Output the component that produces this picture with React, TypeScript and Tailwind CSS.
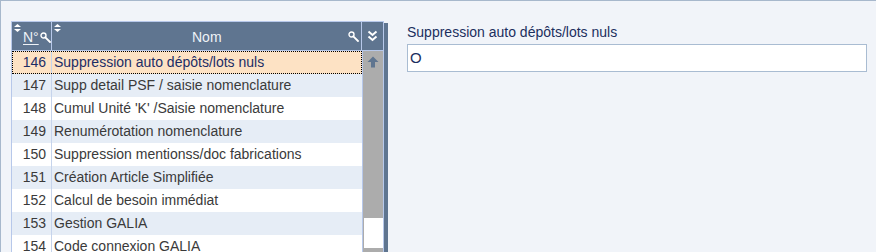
import React from 'react';

// Rows of the parameter list
interface Row {
  num: number;
  label: string;
}

const rows: Row[] = [
  { num: 146, label: 'Suppression auto dépôts/lots nuls' },
  { num: 147, label: 'Supp detail PSF / saisie nomenclature' },
  { num: 148, label: "Cumul Unité 'K' /Saisie nomenclature" },
  { num: 149, label: 'Renumérotation nomenclature' },
  { num: 150, label: 'Suppression mentionss/doc fabrications' },
  { num: 151, label: 'Création Article Simplifiée' },
  { num: 152, label: 'Calcul de besoin immédiat' },
  { num: 153, label: 'Gestion GALIA' },
  { num: 154, label: 'Code connexion GALIA' },
];

const SortIcon = () => (
  <svg width="7" height="8" viewBox="0 0 7 8" className="absolute left-[2px] top-[2px]">
    <path d="M3.5 0 L7 3 L0 3 Z" fill="#ffffff" />
    <path d="M0 5 L7 5 L3.5 8 Z" fill="#ffffff" />
  </svg>
);

const KeyIcon = ({ className }: { className: string }) => (
  <svg width="11" height="11" viewBox="0 0 11 11" className={className}>
    <circle cx="3.5" cy="3.5" r="2.5" fill="none" stroke="#ffffff" strokeWidth="1.4" />
    <path d="M5.3 5.3 L10 10" stroke="#ffffff" strokeWidth="1.8" strokeLinecap="round" />
  </svg>
);

export default function App() {
  const selected = 146;

  return (
    <div
      className="w-[876px] h-[252px] overflow-hidden bg-[#f1f4f9] border-t border-l border-[#a7b8cc] flex items-start"
      style={{ fontFamily: '"Liberation Sans", Arial, sans-serif' }}
    >
      {/* Table */}
      <div className="ml-[10px] mt-[20px] w-[373px] border border-[#b7c8ea] bg-white shadow-[4px_2px_0_0_#5f7590]">
        {/* Header */}
        <div className="flex h-[29px] bg-[#5f7590] border-b border-[#b7c8ea]">
          <div className="relative w-[40px] border-r border-[#b7c8ea] text-[14px] text-[#eef2f7]">
            <SortIcon />
            <span className="absolute left-[11px] top-[5px] underline underline-offset-2">N°</span>
            <KeyIcon className="absolute left-[28px] top-[10px]" />
          </div>
          <div className="relative w-[310px] border-r border-[#b7c8ea] text-[14px] text-[#eef2f7]">
            <SortIcon />
            <span className="absolute left-[140px] top-[5px]">Nom</span>
            <KeyIcon className="absolute right-[2px] top-[9px]" />
          </div>
          <div className="flex-1 flex items-center justify-center">
            <svg width="11" height="12" viewBox="0 0 11 12">
              <path d="M1.5 1.5 L5.5 5 L9.5 1.5" fill="none" stroke="#ffffff" strokeWidth="2" />
              <path d="M1.5 6.5 L5.5 10 L9.5 6.5" fill="none" stroke="#ffffff" strokeWidth="2" />
            </svg>
          </div>
        </div>

        {/* Body */}
        <div className="flex">
          <div className="w-[350px] flex flex-col">
            {rows.map((row, i) => {
              const isSel = row.num === selected;
              const bg = isSel ? 'bg-[#fde2c4]' : i % 2 === 1 ? 'bg-[#e6edf6]' : 'bg-white';
              return (
                <div
                  key={row.num}
                  className={`flex h-[23px] text-[14px] ${bg} ${
                    isSel ? 'text-[#1c2d66] outline outline-1 outline-dotted outline-black -outline-offset-1' : 'text-[#3a3a3a]'
                  }`}
                >
                  <div className="w-[40px] border-r border-[#c6d4ec] flex items-center justify-end pr-[5px]">
                    {row.num}
                  </div>
                  <div className="flex-1 flex items-center pl-[2px] whitespace-nowrap">{row.label}</div>
                </div>
              );
            })}
          </div>
          {/* Scrollbar */}
          <div className="flex-1 border-l border-[#b7c8ea] bg-[#acacac] flex flex-col items-center">
            <div className="h-[21px] flex items-center justify-center">
              <svg width="12" height="12" viewBox="0 0 12 12">
                <path d="M6 0.5 L11.5 6 L8 6 L8 11.5 L4 11.5 L4 6 L0.5 6 Z" fill="#5f7590" />
              </svg>
            </div>
            <div className="mt-[146px] w-[19px] h-[30px] bg-white" />
          </div>
        </div>
      </div>

      {/* Detail panel */}
      <div className="ml-[23px] mt-[23px] flex flex-col">
        <div className="text-[14px] leading-4 text-[#1c2f5e] whitespace-nowrap">Suppression auto dépôts/lots nuls</div>
        <div className="mt-[4px] w-[460px] h-[28px] bg-white border border-[#a9bcd2] flex items-center pl-[2px] text-[15px] text-[#1c2f5e]">
          O
        </div>
      </div>
    </div>
  );
}
